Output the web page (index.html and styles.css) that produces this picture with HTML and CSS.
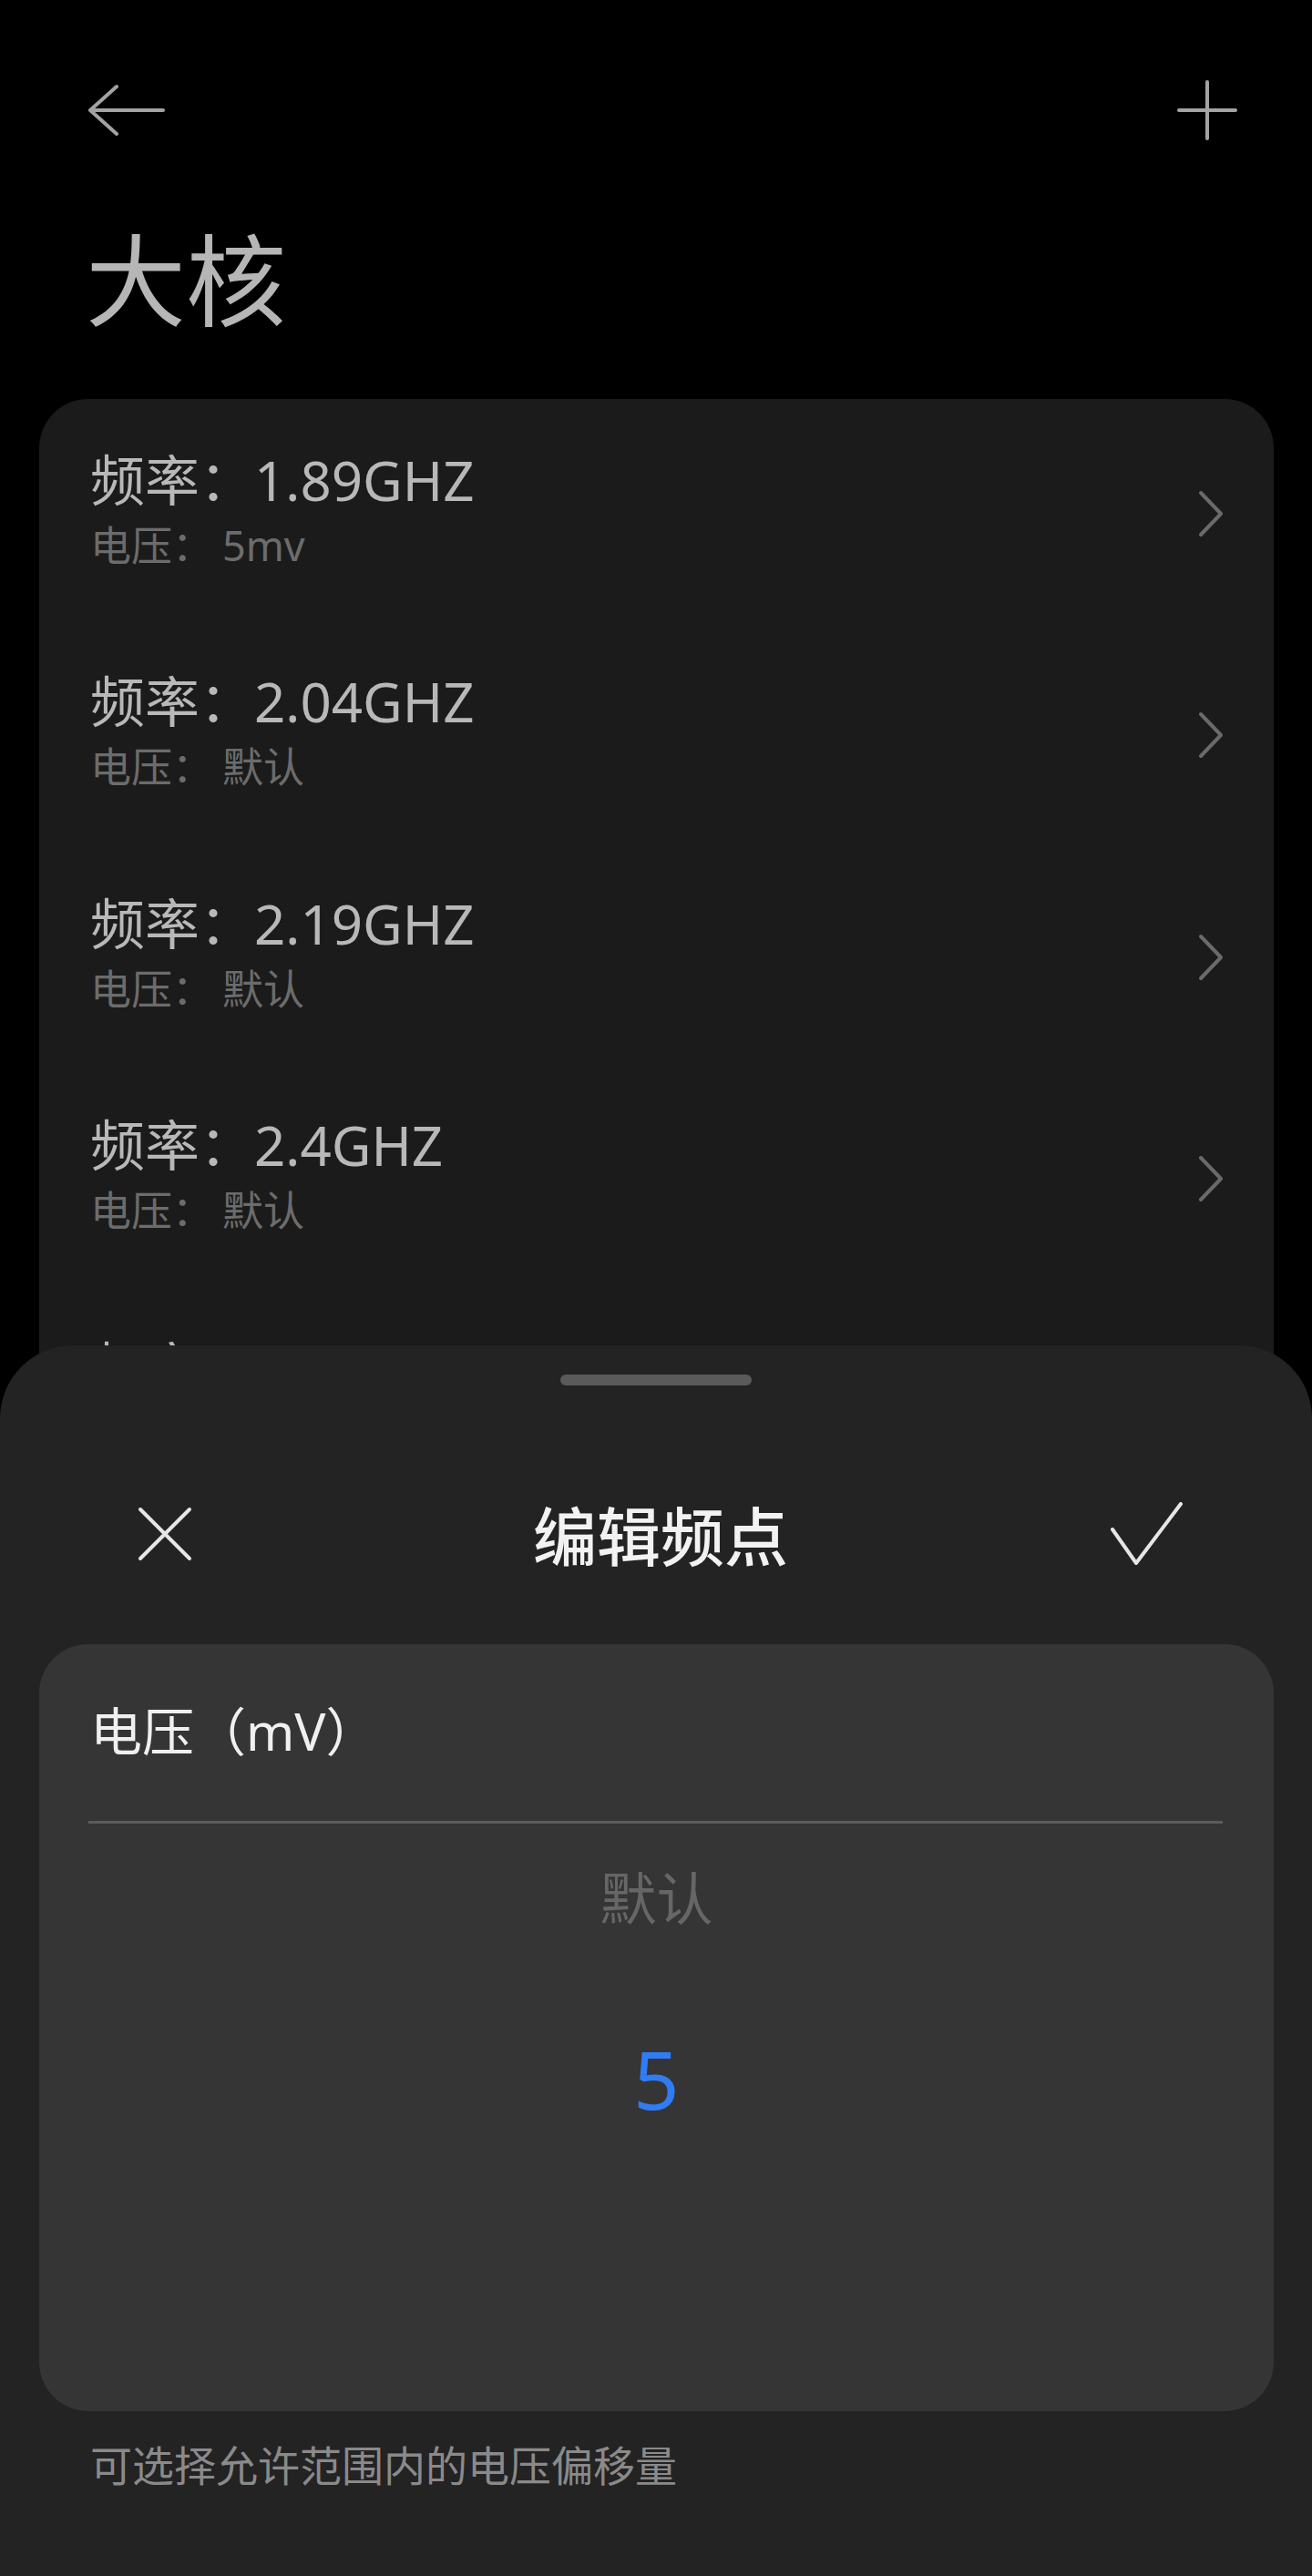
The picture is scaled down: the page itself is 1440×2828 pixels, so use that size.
FILE: index.html
```html
<!DOCTYPE html>
<html lang="zh-CN">

<head>
  <meta charset="UTF-8" />
  <meta name="viewport" content="width=device-width, initial-scale=1" />
  <title>大核</title>
  <link rel="stylesheet" href="styles.css">
</head>

<body>
  <header class="topbar">
    <button class="icon-button" aria-label="返回">
      <svg width="84" height="58" viewBox="0 0 84 58"><path d="M2 29 H82 M31 3 L2 29 L31 55" /></svg>
    </button>
    <button class="icon-button" aria-label="添加">
      <svg width="66" height="66" viewBox="0 0 66 66"><path d="M33 2 V64 M2 33 H64" /></svg>
    </button>
  </header>

  <h1 class="page-title">大核</h1>

  <ul class="freq-list">
    <li class="freq-item">
      <div class="freq-text">
        <p class="freq-title">频率：1.89GHZ</p>
        <p class="freq-sub">电压<span class="sep">：</span>5mv</p>
      </div>
      <svg class="chevron" width="30" height="52" viewBox="0 0 30 52"><path d="M4 3 L26 26 L4 49" /></svg>
    </li>
    <li class="freq-item">
      <div class="freq-text">
        <p class="freq-title">频率：2.04GHZ</p>
        <p class="freq-sub">电压<span class="sep">：</span>默认</p>
      </div>
      <svg class="chevron" width="30" height="52" viewBox="0 0 30 52"><path d="M4 3 L26 26 L4 49" /></svg>
    </li>
    <li class="freq-item">
      <div class="freq-text">
        <p class="freq-title">频率：2.19GHZ</p>
        <p class="freq-sub">电压<span class="sep">：</span>默认</p>
      </div>
      <svg class="chevron" width="30" height="52" viewBox="0 0 30 52"><path d="M4 3 L26 26 L4 49" /></svg>
    </li>
    <li class="freq-item">
      <div class="freq-text">
        <p class="freq-title">频率：2.4GHZ</p>
        <p class="freq-sub">电压<span class="sep">：</span>默认</p>
      </div>
      <svg class="chevron" width="30" height="52" viewBox="0 0 30 52"><path d="M4 3 L26 26 L4 49" /></svg>
    </li>
    <li class="freq-item">
      <div class="freq-text">
        <p class="freq-title">频率：2.6GHZ</p>
        <p class="freq-sub">电压<span class="sep">：</span>默认</p>
      </div>
      <svg class="chevron" width="30" height="52" viewBox="0 0 30 52"><path d="M4 3 L26 26 L4 49" /></svg>
    </li>
  </ul>

  <!-- folha inferior: editar ponto de frequência -->
  <section class="sheet">
    <div class="sheet-handle"></div>

    <div class="sheet-header">
      <button class="icon-button close" aria-label="关闭">
        <svg width="60" height="60" viewBox="0 0 60 60"><path d="M3 3 L57 57 M57 3 L3 57" /></svg>
      </button>
      <h2 class="sheet-title">编辑频点</h2>
      <button class="icon-button confirm" aria-label="确定">
        <svg width="80" height="70" viewBox="0 0 80 70"><path d="M2 30 L28 67 L77 2" /></svg>
      </button>
    </div>

    <div class="picker-card">
      <p class="picker-label">电压（mV）</p>
      <div class="picker-divider"></div>
      <p class="picker-option">默认</p>
      <p class="picker-option selected">5</p>
    </div>

    <p class="sheet-note">可选择允许范围内的电压偏移量</p>
  </section>
</body>

</html>
```

FILE: styles.css
```css
* {
  box-sizing: border-box;
}

body {
  margin: 0;
  height: 2828px;
  overflow: hidden;
  position: relative;
  background-color: #000;
  color: #b5b5b5;
  font-family: "Noto Sans", "Noto Sans CJK SC", sans-serif;
}

p {
  margin: 0;
}

.icon-button {
  background: none;
  border: none;
  padding: 0;
  display: block;
  cursor: pointer;
}

.icon-button svg {
  display: block;
  fill: none;
  stroke-linecap: round;
  stroke-linejoin: round;
}

.topbar {
  height: 242px;
  padding: 0 82px 0 97px;
  display: flex;
  justify-content: space-between;
  align-items: center;
}

.topbar svg {
  stroke: #a3a3a3;
  stroke-width: 4;
}

.page-title {
  margin: 0 0 76px;
  padding-left: 94px;
  font-family: "Noto Sans CJK SC", sans-serif;
  font-size: 110px;
  font-weight: 400;
  line-height: 120px;
  color: #b6b6b6;
}

.freq-list {
  list-style: none;
  margin: 0 42px 0 43px;
  padding: 4px 0 0;
  background-color: #1b1b1b;
  border-radius: 54px;
}

.freq-item {
  height: 243.5px;
  padding: 0 54px 0 56px;
  display: flex;
  justify-content: space-between;
  align-items: center;
}

.freq-title {
  font-size: 60px;
  line-height: 70px;
  color: #b8b8b8;
}

.freq-sub {
  font-size: 45px;
  line-height: 74px;
  color: #6c6c6c;
}

.freq-sub .sep {
  margin-right: 10px;
}

.chevron {
  fill: none;
  stroke: #6a6a6a;
  stroke-width: 4;
  stroke-linecap: round;
  stroke-linejoin: round;
}

.sheet {
  position: absolute;
  top: 1477px;
  left: 0;
  right: 0;
  bottom: 0;
  background-color: #232323;
  border-radius: 80px 80px 0 0;
}

.sheet-handle {
  width: 210px;
  height: 12px;
  margin: 32px auto 0;
  border-radius: 6px;
  background-color: #5a5a5a;
}

.sheet-header {
  height: 80px;
  margin-top: 123px;
  padding: 0 141px 0 151px;
  display: grid;
  grid-template-columns: 1fr auto 1fr;
  align-items: center;
}

.sheet-header svg {
  stroke: #e6e6e6;
  stroke-width: 4;
}

.close {
  justify-self: start;
}

.confirm {
  justify-self: end;
}

.sheet-title {
  margin: 0;
  font-family: "Noto Sans CJK SC", sans-serif;
  font-size: 70px;
  font-weight: 500;
  line-height: 80px;
  color: #f2f2f2;
}

.picker-card {
  height: 842px;
  margin: 81px 42px 0 43px;
  padding: 60px 0 0;
  background-color: #353535;
  border-radius: 54px;
}

.picker-label {
  padding-left: 56px;
  font-size: 57px;
  line-height: 70px;
  color: #f0f0f0;
}

.picker-divider {
  height: 3px;
  margin: 64px 56px 0 54px;
  background-color: #5c5c5c;
}

.picker-option {
  margin-top: 32px;
  text-align: center;
  font-size: 62px;
  line-height: 100px;
  color: #666;
}

.picker-option.selected {
  margin-top: 98px;
  font-size: 88px;
  color: #2f7cf4;
}

.sheet-note {
  margin-top: 29px;
  padding-left: 99px;
  font-size: 46px;
  line-height: 60px;
  color: #8a8a8a;
}
```
